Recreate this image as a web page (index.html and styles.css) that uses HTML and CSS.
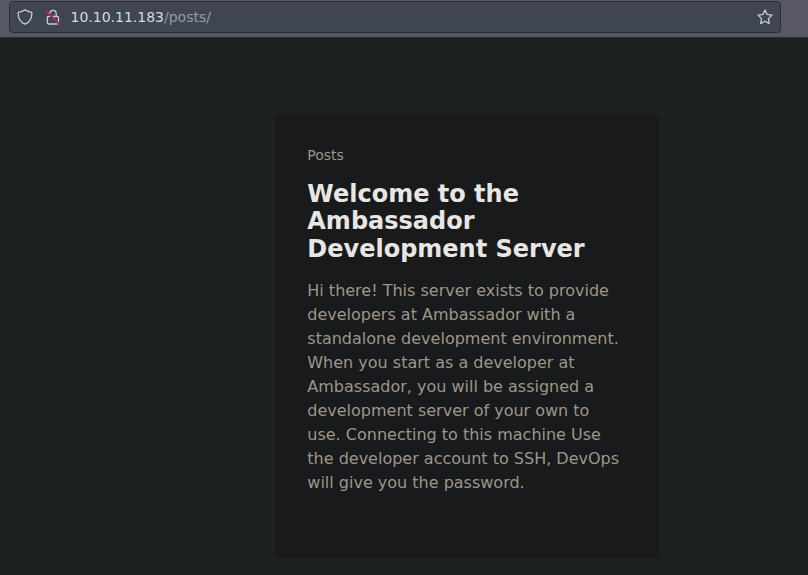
FILE: index.html
```html
<!DOCTYPE html>
<html lang="en">
<head>
<meta charset="utf-8">
<title>Posts</title>
<link rel="stylesheet" href="styles.css">
</head>
<body>
<header class="toolbar">
  <div class="urlbar">
    <svg class="icon" viewBox="0 0 16 16"><path d="M8 .8C6.200 2.200 3.800 3 1.200 3.300 .9 8.200 2.300 12.800 8 15.200 13.700 12.800 15.100 8.200 14.800 3.300 12.200 3 9.800 2.200 8 .8Z"/></svg>
    <svg class="icon lock" viewBox="0 0 16 16"><path d="M4.800 4.500a3.200 3.200 0 0 1 6.400 0V7"/><path d="M4.500 7.500H3.500a1.200 1.200 0 0 0-1.200 1.200V13.500a1.500 1.500 0 0 0 1.500 1.500H12M8.500 7.500H12.200a1.300 1.300 0 0 1 1.300 1.300V12.500"/><path class="slash" d="M1.500 2.300 14.500 15.200"/></svg>
    <span class="url"><b>10.10.11.183</b>/posts/</span>
    <svg class="icon star" viewBox="0 0 16 16"><path d="M8 1 10.100 5.400 15 6.100 11.500 9.600 12.300 14.600 8 12.200 3.700 14.600 4.500 9.600 1 6.100 5.900 5.400Z"/></svg>
  </div>
</header>
<main>
  <article class="card">
    <p class="section">Posts</p>
    <h1>Welcome to the Ambassador Development Server</h1>
    <p class="summary">Hi there! This server exists to provide developers at Ambassador with a standalone development environment. When you start as a developer at Ambassador, you will be assigned a development server of your own to use. Connecting to this machine Use the developer account to SSH, DevOps will give you the password.</p>
  </article>
</main>
</body>
</html>
```
FILE: styles.css
```css
* { box-sizing: border-box; }
body { margin: 0; height: 575px; overflow: hidden; background: #1e2122; font-family: "DejaVu Sans", sans-serif; }
.toolbar { height: 38px; padding: 1px 27px 0 9px; background: #585765; border-bottom: 1px solid #2b2d38; }
.urlbar { height: 32px; display: flex; align-items: center; padding: 0 7px; border: 1px solid #2b2e39; border-radius: 4px; background: #404552; }
.icon { width: 16px; height: 16px; fill: none; stroke: #c6ccd6; stroke-width: 1.300; stroke-linejoin: round; stroke-linecap: round; }
.lock { margin-left: 12px; }
.slash { stroke: #e21b48; stroke-width: 1.500; }
.url { margin-left: 9.500px; font-size: 14px; color: #969ba5; }
.url b { font-weight: 400; color: #d3dae3; }
.star { margin-left: auto; }
.card { width: 384px; height: 443px; margin: 77px 0 0 275px; padding: 32px 31.700px 32px 32.300px; border-radius: 2px; background: #181a1b; }
.section { margin: 0; font-size: 14px; line-height: 16px; color: #9e9689; }
h1 { margin: 17.500px 0 0; font-size: 24px; line-height: 27.500px; color: #e8e6e3; }
.summary { margin: 15.500px 0 0; font-size: 16px; line-height: 24px; color: #9e9689; }
```
